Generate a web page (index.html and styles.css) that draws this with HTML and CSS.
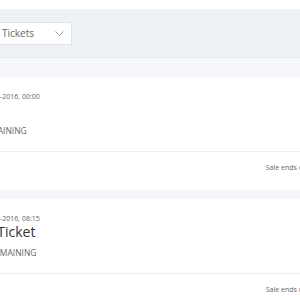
FILE: index.html
```html
<!DOCTYPE html>
<html>
  <head>
    <meta charset="utf-8" />
    <title>Tickets</title>
    <link rel="stylesheet" href="styles.css">
  </head>
  <body>
    <div class="page">
      <div class="filters">
        <div class="select">
          <span>All Tickets</span>
          <svg class="chevron" width="9" height="5" viewBox="0 0 9 5">
            <path d="M0.5 0.5 L4.5 4.5 L8.5 0.5" fill="none" stroke="#9aa0a8" stroke-width="1" />
          </svg>
        </div>
      </div>

      <div class="ticket-list">
        <div class="ticket">
          <div class="ticket-body">
            <div class="ticket-date">At 01-10-2016, 00:00</div>
            <div class="ticket-title">Kid</div>
            <div class="ticket-left">5 Remaining</div>
          </div>
          <div class="ticket-footer">Sale ends on 31-12-2016, 23:59</div>
        </div>

        <div class="ticket">
          <div class="ticket-body">
            <div class="ticket-date">At 01-10-2016, 08:15</div>
            <div class="ticket-title">VIP Ticket</div>
            <div class="ticket-left">100 Remaining</div>
          </div>
          <div class="ticket-footer">Sale ends on 31-12-2016, 23:59</div>
        </div>
      </div>
    </div>
  </body>
</html>
```

FILE: styles.css
```css
body {
  background: #fff;
  font-family: "Open Sans", sans-serif;
  margin: 0;
  overflow: hidden;
}
.page {
  width: 420px;
  margin-left: -27px;
  padding-top: 9px;
}
.filters {
  background-color: #eef1f4;
  height: 48px;
  display: flex;
  align-items: center;
  padding-left: 5px;
}
.select {
  width: 94px;
  height: 23px;
  box-sizing: border-box;
  background: #fff;
  border: 1px solid #dfe3e8;
  display: flex;
  align-items: center;
  justify-content: space-between;
  padding: 0 7px 0 9px;
  font-size: 10px;
  color: #666;
}
.ticket-list {
  background-color: #f6f7fb;
  border-top: 1px solid #e6e9ef;
  padding-top: 19px;
}
.ticket {
  background: #fff;
  margin-bottom: 9px;
}
.ticket-body {
  padding: 14px 0 14px 0;
  border-bottom: 1px solid #eceef2;
}
.ticket-date {
  font-size: 7px;
  line-height: 12px;
  color: #666;
}
.ticket-title {
  font-size: 14px;
  line-height: 14px;
  color: #333;
}
.ticket-left {
  margin-top: 8px;
  font-size: 8.5px;
  line-height: 12px;
  color: #666;
  text-transform: uppercase;
}
.ticket-footer {
  padding: 10px 26px 16px 0;
  font-size: 7px;
  line-height: 12px;
  color: #666;
  text-align: right;
}
```
